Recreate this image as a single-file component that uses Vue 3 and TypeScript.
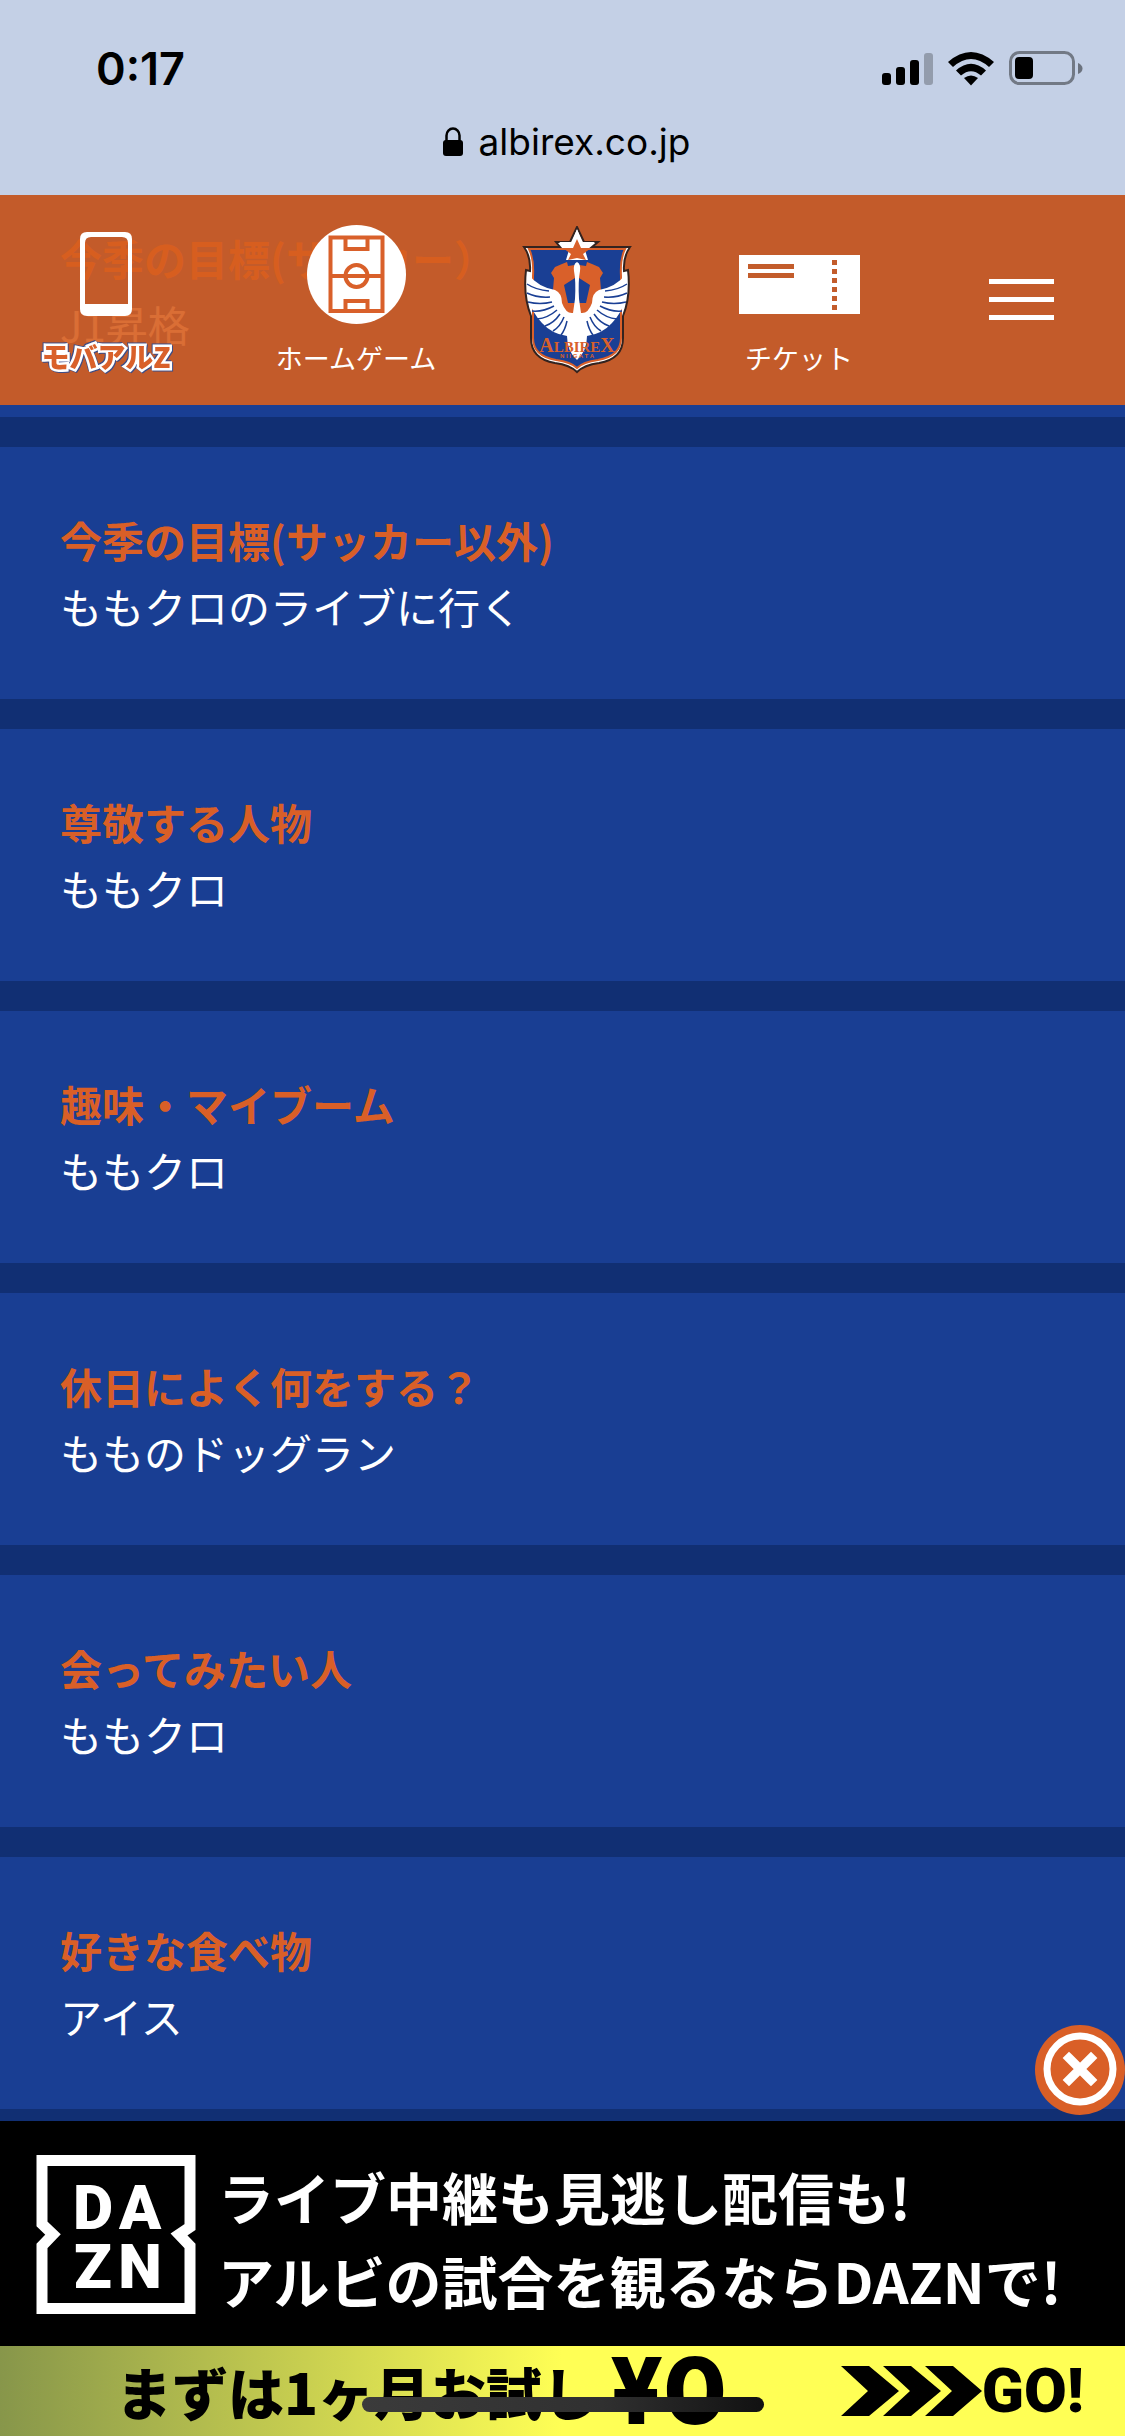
<script setup lang="ts">
interface Answer {
  title: string
  body: string
}

const answers: Answer[] = [
  { title: '今季の目標(サッカー）', body: 'J1昇格' },
  { title: '今季の目標(サッカー以外)', body: 'ももクロのライブに行く' },
  { title: '尊敬する人物', body: 'ももクロ' },
  { title: '趣味・マイブーム', body: 'ももクロ' },
  { title: '休日によく何をする？', body: 'もものドッグラン' },
  { title: '会ってみたい人', body: 'ももクロ' },
  { title: '好きな食べ物', body: 'アイス' },
]

const ticketDots = [0, 1, 2, 3, 4, 5]
</script>

<template>
  <div class="page">
    <header class="browser">
      <div class="status">
        <span class="clock">0:17</span>
        <svg class="status-icons" viewBox="0 0 202 36" aria-hidden="true">
          <rect x="1" y="22" width="9" height="12" rx="3" />
          <rect x="15" y="16" width="9" height="18" rx="3" />
          <rect x="29" y="9" width="9" height="25" rx="3" />
          <rect x="43" y="2" width="9" height="32" rx="3" opacity="0.25" />
          <path d="M67 11Q90 -9 113 11L108 16Q90 0 72 16Z" />
          <path d="M75 19.500Q90 6 105 19.500L100 24.500Q90 16 80 24.500Z" />
          <path d="M83 27Q90 22 97 27L90 34.500Z" />
          <rect x="129.500" y="1.500" width="63" height="31" rx="9" fill="none" stroke="#000" stroke-width="3" opacity="0.42" />
          <path d="M197 12Q201.500 14 201.500 17.500T197 23Z" opacity="0.45" />
          <rect x="134" y="6" width="18" height="22" rx="4" />
        </svg>
      </div>
      <div class="address">
        <svg class="lock" viewBox="0 0 20 30" aria-hidden="true">
          <rect x="0" y="13" width="20" height="16" rx="3" />
          <path d="M3.500 15V8.500a6.500 7 0 0 1 13 0V15" fill="none" stroke="#000" stroke-width="2.500" />
        </svg>
        <span>albirex.co.jp</span>
      </div>
    </header>

    <div class="site">
      <nav class="menu">
        <a class="item" href="#mobile">
          <span class="icon">
            <svg width="52" height="84" viewBox="0 0 52 84" aria-hidden="true">
              <path fill="#fff" fill-rule="evenodd" d="M7 0H45Q52 0 52 7V77Q52 84 45 84H7Q0 84 0 77V7Q0 0 7 0ZM11 5Q5 5 5 11V72H48V11Q48 5 42 5Z" />
            </svg>
          </span>
          <span class="wordmark">モバアルZ</span>
        </a>
        <a class="item" href="#home-game">
          <span class="icon">
            <svg width="99" height="99" viewBox="0 0 99 99" aria-hidden="true">
              <circle cx="49.500" cy="49.500" r="49.500" fill="#fff" />
              <g fill="none" stroke="#d9602a" stroke-width="4">
                <path d="M23.500 12.500H75.500V86H23.500ZM23.500 51H37M62 51H75.500M38.500 12.500V24H60.500V12.500M38.500 86V76H60.500V86" />
                <circle cx="49.500" cy="51" r="11" fill="#fff" />
                <path d="M38.500 51H60.500" />
              </g>
            </svg>
          </span>
          <span class="label">ホームゲーム</span>
        </a>
        <a class="item crest" href="#top" aria-label="ALBIREX NIIGATA">
          <svg width="110" height="148" viewBox="0 0 110 148" aria-hidden="true">
            <path d="M2 21H38L34 16H48L55 1L62 16H76L70 21H108Q101 31 102 45L106 44Q109 70 101 90V112Q101 133 77 137Q62 139 55 146Q48 139 33 137Q9 133 9 112V90Q1 70 4 44L8 45Q9 31 2 21Z" fill="#fff" stroke="#33231f" stroke-width="2" />
            <path d="M7 23H103Q98 33 99 50V112Q99 130 76 134Q61 136 55 142Q49 136 34 134Q11 130 11 112V50Q12 33 7 23Z" fill="#1a3f94" stroke="#d9602a" stroke-width="2" />
            <path d="M55 3L60 16H73L63 24L66 34H44L47 24L37 16H50Z" fill="#fff" />
            <path d="M55 13L59 22H69L61 28L64 34L55 32L46 34L49 28L41 22H51Z" fill="#d9602a" />
            <path d="M29 47L33 41L40 38L45 36L46 40L53 39V52L42 59L46 77H53V87H44L36 76L31 64L32 52ZM81 47L77 41L70 38L65 36L64 40L57 39V52L68 59L64 77H57V87H66L74 76L79 64L78 52Z" fill="#d9602a" />
            <path d="M55 36Q51 38 52 45Q54 55 53 73L51 87Q44 88 40 77Q40 67 33 64Q16 61 6 48Q1 77 20 97Q30 108 45 110Q45 125 55 134Q65 125 65 110Q80 108 90 97Q109 77 104 48Q94 61 77 64Q70 67 70 77Q66 88 59 87L57 73Q56 55 58 45Q59 38 55 36Z" fill="#fff" />
            <path d="M5 58Q14 64 27 65M5 67Q15 72 28 71M6 76Q18 79 30 76M10 85Q21 86 32 80M15 93Q26 92 35 84M23 100Q32 97 38 88M31 105Q38 101 42 91M39 109Q43 104 45 95M105 58Q96 64 83 65M105 67Q95 72 82 71M104 76Q92 79 80 76M100 85Q89 86 78 80M95 93Q84 92 75 84M87 100Q78 97 72 88M79 105Q72 101 68 91M71 109Q67 104 65 95" fill="none" stroke="#1a3f94" stroke-width="1.500" />
            <text x="55" y="126" class="crest-name" text-anchor="middle"><tspan class="tall">A</tspan>LBIRE<tspan class="tall">X</tspan></text>
            <text x="55" y="132" class="crest-city" text-anchor="middle">N I I G A T A</text>
          </svg>
        </a>
        <a class="item" href="#ticket">
          <span class="icon ticket">
            <svg width="121" height="59" viewBox="0 0 121 59" aria-hidden="true">
              <rect width="121" height="59" fill="#fff" />
              <g fill="#c35c2b">
                <rect x="9" y="9" width="46" height="5" />
                <rect x="9" y="18" width="46" height="5" />
                <rect v-for="n in ticketDots" :key="n" x="93" :y="5 + n * 9" width="5" height="5" />
              </g>
            </svg>
          </span>
          <span class="label">チケット</span>
        </a>
        <button class="burger" type="button" aria-label="メニュー">
          <span></span><span></span><span></span>
        </button>
      </nav>

      <dl class="answers">
        <div v-for="answer in answers" :key="answer.title" class="card">
          <dt>{{ answer.title }}</dt>
          <dd>{{ answer.body }}</dd>
        </div>
      </dl>
    </div>

    <aside class="banner">
      <button class="close" type="button" aria-label="閉じる">
        <svg viewBox="0 0 90 90" aria-hidden="true">
          <circle cx="45" cy="45" r="45" fill="#d95f27" />
          <circle cx="45" cy="44" r="33" fill="none" stroke="#fff" stroke-width="7" />
          <path d="M34 33L56 55M56 33L34 55" stroke="#fff" stroke-width="9" stroke-linecap="square" />
        </svg>
      </button>
      <a class="promo" href="#dazn">
        <svg class="dazn" viewBox="0 0 160 160" aria-hidden="true">
          <path d="M6 6.500H154V73L143 80.500L154 92V154.500H6V92L17 80.500L6 70Z" fill="none" stroke="#fff" stroke-width="11" />
          <g class="dazn-text" text-anchor="middle">
            <text x="57" y="75">D</text>
            <text x="104" y="75">A</text>
            <text x="57" y="134">Z</text>
            <text x="104" y="134">N</text>
          </g>
        </svg>
        <span class="copy">
          <span>ライブ中継も見逃し配信も!</span>
          <span>アルビの試合を観るならDAZNで!</span>
        </span>
      </a>
      <a class="trial" href="#trial">
        <span class="trial-text">まずは1ヶ月お試し</span>
        <span class="price">¥0</span>
        <span class="go">
          <svg width="141" height="50" viewBox="0 0 141 50" aria-hidden="true">
            <path d="M0 0H28L58 25L28 50H0L27 25ZM42 0H70L100 25L70 50H42L69 25ZM84 0H112L141 25L112 50H84L111 25Z" />
          </svg>
          <span>GO!</span>
        </span>
      </a>
      <div class="home-indicator"></div>
    </aside>
  </div>
</template>

<style>
body {
  margin: 0;
  background: #112f73;
}
</style>

<style scoped>
.page {
  display: flex;
  flex-direction: column;
  min-height: 100vh;
  overflow: hidden;
  font-family: "Noto Sans CJK JP", "Noto Sans", sans-serif;
}

a {
  color: inherit;
  text-decoration: none;
}

button {
  border: 0;
  padding: 0;
  background: none;
}

svg {
  display: block;
}

.browser {
  position: relative;
  z-index: 2;
  box-sizing: border-box;
  height: 195px;
  padding-top: 44px;
  background: #c4d0e6;
  font-family: Inter, sans-serif;
  color: #000;
}

.status {
  display: flex;
  justify-content: space-between;
  align-items: center;
  height: 50px;
  padding: 0 42px 0 96px;
}

.clock {
  font-size: 45px;
  line-height: 50px;
  font-weight: 600;
}

.status-icons {
  width: 202px;
  height: 36px;
}

.address {
  display: flex;
  justify-content: center;
  align-items: center;
  gap: 16px;
  height: 48px;
  margin-top: 24px;
  padding-left: 8px;
  font-size: 37px;
  line-height: 48px;
}

.lock {
  width: 20px;
  height: 30px;
}

.site {
  position: relative;
  flex: 1;
}

.menu {
  position: absolute;
  z-index: 1;
  top: 0;
  left: 0;
  right: 0;
  display: grid;
  grid-template-columns: 212fr 288fr 154fr 290fr 154fr 27fr;
  box-sizing: border-box;
  height: 210px;
  background: rgba(214, 94, 31, 0.9);
  color: #fff;
}

.item {
  display: flex;
  flex-direction: column;
  align-items: center;
  padding-top: 29px;
}

.icon {
  display: flex;
  align-items: center;
  height: 100px;
}

.ticket {
  box-sizing: border-box;
  padding-top: 20px;
}

.label {
  margin-top: 16px;
  font-size: 27px;
  line-height: 36px;
  white-space: nowrap;
}

.wordmark {
  margin-top: 12px;
  color: #d9602a;
  font-size: 28px;
  line-height: 40px;
  font-weight: 900;
  white-space: nowrap;
  -webkit-text-stroke: 5px #fff;
  paint-order: stroke fill;
  filter: drop-shadow(1px 1px 0 #3c4c86) drop-shadow(-1px -1px 0 #3c4c86);
}

.crest {
  padding-top: 31px;
}

.crest-name {
  fill: #d9602a;
  font: 700 15px "Liberation Serif", serif;
}

.tall {
  font-size: 20px;
}

.crest-city {
  fill: #d9602a;
  font: 700 6px "Liberation Sans", sans-serif;
}

.burger {
  display: flex;
  flex-direction: column;
  gap: 13px;
  align-items: center;
  align-self: start;
  margin-top: 84px;
}

.burger span {
  width: 65px;
  height: 5px;
  background: #fff;
}

.answers {
  display: flex;
  flex-direction: column;
  gap: 30px;
  margin: -30px 0 0;
  padding-bottom: 12px;
  background: #112f73;
}

.card {
  padding: 60px;
  background: #193e93;
  font-size: 42px;
  line-height: 66px;
}

dt {
  font-weight: 700;
  color: #d95f27;
}

dd {
  margin: 0;
  color: #fff;
}

.banner {
  position: relative;
  z-index: 2;
}

.close {
  position: absolute;
  top: -96px;
  right: 0;
  width: 90px;
  height: 90px;
}

.promo {
  display: flex;
  align-items: center;
  gap: 22px;
  height: 225px;
  padding-left: 36px;
  background: #000;
  color: #fff;
}

.dazn {
  flex: none;
  width: 160px;
  height: 160px;
}

.dazn-text {
  fill: #fff;
  font: 900 62px Roboto, sans-serif;
}

.copy {
  display: flex;
  flex-direction: column;
  padding-top: 8px;
  font-size: 56px;
  font-weight: 700;
  line-height: 84px;
  white-space: nowrap;
}

.trial {
  display: flex;
  align-items: center;
  height: 90px;
  padding: 0 41px 0 116px;
  background: linear-gradient(90deg, #87964a 0%, #ffff55 50%);
  color: #000;
  white-space: nowrap;
}

.trial-text {
  font-size: 56px;
  line-height: 86px;
  font-weight: 900;
}

.price {
  margin-left: 12px;
  font-family: Inter, sans-serif;
  font-size: 92px;
  line-height: 90px;
  font-weight: 800;
}

.go {
  display: flex;
  align-items: center;
  margin-left: auto;
  font-family: Roboto, sans-serif;
  font-size: 62px;
  line-height: 90px;
  font-weight: 900;
}

.home-indicator {
  position: absolute;
  left: 50%;
  bottom: 24px;
  width: 402px;
  height: 15px;
  margin-left: -201px;
  border-radius: 8px;
  background: linear-gradient(90deg, #3b3b3b, #303030 60%, #111);
}
</style>
